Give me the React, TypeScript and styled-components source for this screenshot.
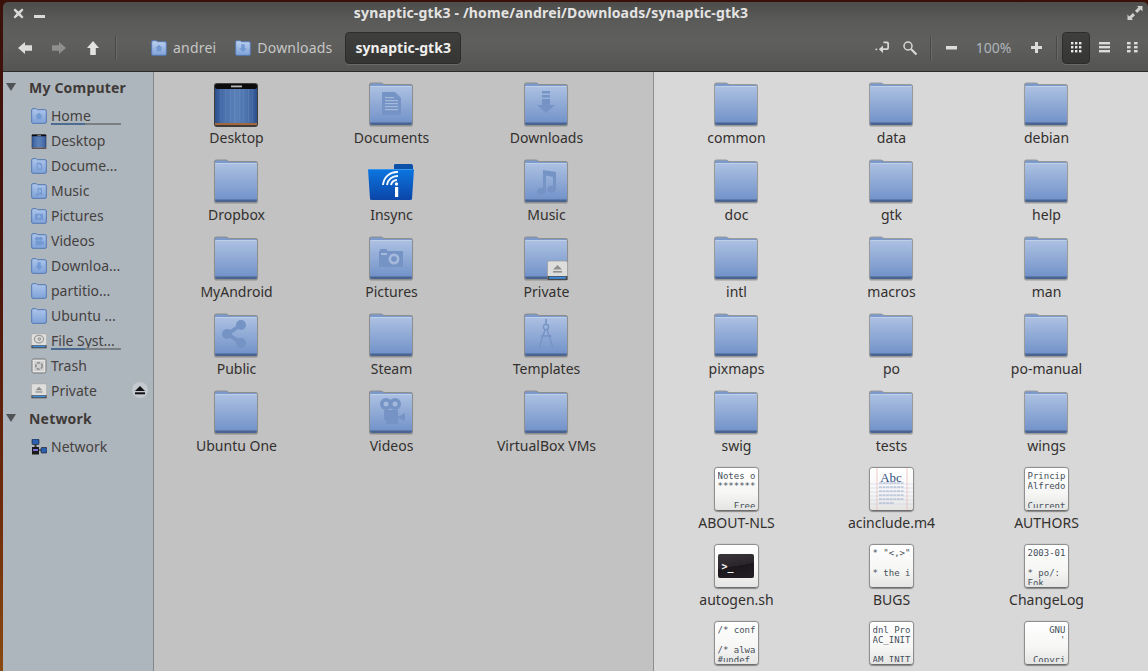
import React from "react";
import styled, { createGlobalStyle } from "styled-components";

const Global = createGlobalStyle`
  html, body { margin: 0; height: 100%; background: #2a0f08; overflow: hidden; }
  #root { height: 671px; }
  * { box-sizing: border-box; }
`;

const FONT = `"Noto Sans", "Open Sans", sans-serif`;

const Desktop = styled.div`
  width: 1148px; height: 671px; padding: 2px 0 0 3px;
  background: linear-gradient(180deg, #3a100a 0%, #4a150c 40%, #6e2a0a 75%, #8a4a10 100%);
  overflow: hidden;
`;
const Window = styled.div`
  height: 100%; display: flex; flex-direction: column; border-radius: 5px 5px 0 0; overflow: hidden;
  font-family: ${FONT};
`;
const Chrome = styled.div`
  height: 70px; flex: none; display: flex; flex-direction: column;
  background: linear-gradient(180deg, #4d4d4b 0%, #5b5b5a 30%, #5f5f5e 60%, #545453 100%);
  border-bottom: 1px solid #2c2c2c;
`;
const TitleBar = styled.div`
  height: 22px; flex: none; display: flex; align-items: center; position: relative; padding: 0 5px 0 10px;
`;
const Title = styled.div`
  position: absolute; left: 0; right: 49px; top: 1px; text-align: center;
  font-size: 14px; line-height: 20px; font-weight: 700; color: #e4e4e2; letter-spacing: 0.15px;
`;
const WinButtons = styled.div`display: flex; align-items: center; gap: 10px;`;
const Spacer = styled.div`flex: 1;`;
const ToolBar = styled.div`
  height: 47px; display: flex; align-items: center; padding: 0 2px 0 14px;
`;
const NavButton = styled.div<{ $w: number }>`
  width: ${p => p.$w}px; display: flex; align-items: center; justify-content: center; flex: none;
`;
const VSep = styled.div<{ $ml: number; $mr: number }>`
  width: 1px; height: 24px; background: #484847; box-shadow: 1px 0 0 #6a6a69;
  margin: 0 ${p => p.$mr}px 0 ${p => p.$ml}px; flex: none;
`;
const Crumb = styled.div<{ $gap: number }>`
  display: flex; align-items: center; gap: 6px; color: #c6c6c4; font-size: 14px; margin-right: ${p => p.$gap}px; letter-spacing: 0.2px;
`;
const ActiveCrumb = styled.div`
  height: 32px; padding: 0 9px; display: flex; align-items: center; border-radius: 4px;
  background: linear-gradient(180deg, #3f3f3e, #353534); border: 1px solid #2d2d2c; box-shadow: 0 1px 0 #6a6a69;
  color: #f0f0ee; font-weight: 700; font-size: 14px; letter-spacing: 0.05px;
`;
const Zoom = styled.div`
  width: 73px; text-align: center; color: #aeb4bb; font-size: 14px; flex: none;
`;
const ViewActive = styled.div`
  width: 28px; height: 32px; border-radius: 4px; display: flex; align-items: center; justify-content: center; flex: none;
  background: linear-gradient(180deg, #3f3f3e, #353534); border: 1px solid #2d2d2c; box-shadow: 0 1px 0 #6a6a69;
`;
const Body = styled.div`flex: 1; display: flex; min-height: 0;`;
const Sidebar = styled.div`
  width: 151px; flex: none; background: #aeb6bd; border-right: 1px solid #7f868c; padding-top: 4px; overflow: hidden;
`;
const Group = styled.div`
  height: 22px; display: flex; align-items: center; color: #3e3a38; font-weight: 700; font-size: 14px; letter-spacing: 0.2px;
  padding-left: 3px;
`;
const GroupGap = styled.div<{ $h: number }>`height: ${p => p.$h}px;`;
const Caret = styled.svg`width: 10px; height: 8px; margin-right: 13px; flex: none;`;
const SideRow = styled.div`
  height: 25px; display: flex; align-items: center; padding-left: 28px; gap: 4px; position: relative;
  color: #45413f; font-size: 14px; white-space: nowrap;
`;
const Usage = styled.div`
  position: absolute; left: 48px; top: 20px; width: 70px; height: 2px; background: #7b7f83;
`;
const UsageFill = styled.div`height: 100%; background: #4c6b8f;`;
const EjectBtn = styled.div`
  position: absolute; left: 129px; top: 4px; width: 16px; height: 16px; border-radius: 50%; background: #c3c9ce;
  display: flex; align-items: center; justify-content: center;
`;
const Panes = styled.div`flex: 1; display: flex; min-width: 0;`;
const Pane = styled.div<{ $bg: string; $w: number }>`
  width: ${p => p.$w}px; flex: none; background: ${p => p.$bg}; padding: 7px 0 0 5px; overflow: hidden;
  display: grid; grid-template-columns: repeat(3, 155px); grid-auto-rows: 77px; align-content: start;
`;
const PaneRule = styled.div`width: 1px; background: #8e8e8e; flex: none;`;
const Item = styled.div`
  display: flex; flex-direction: column; align-items: center; color: #33302e; font-size: 14px; line-height: 19px; white-space: nowrap;
`;
const IconBox = styled.div`
  width: 48px; height: 48px; flex: none; position: relative; margin: 0 2px 1px 0;
  svg { display: block; }
`;
const Thumb = styled.div`
  position: absolute; left: 3px; top: 4px; width: 43px; height: 43px; background: linear-gradient(180deg, #ffffff 0%, #f6f6f5 60%, #e4e4e3 100%);
  border-radius: 3px; border-bottom: 1px solid #6e6e6e; box-shadow: 0 0 1px 1px rgba(70,70,70,.55);
  overflow: hidden; padding: 3px 0 0 3px;
  font-family: "DejaVu Sans Mono", "Liberation Mono", monospace; font-size: 9px; line-height: 10px; color: #46505a; white-space: pre;
`;
const ThumbClip = styled.div`width: 38px; height: 37px; overflow: hidden;`;
const Term = styled.div`
  position: absolute; left: 3px; top: 9px; width: 36px; height: 24px; border-radius: 2px; background: linear-gradient(170deg, #3a353a 0%, #2a252a 50%, #1b171b 50%, #231e25 100%);
  color: #f2f2f2; font-size: 10px; font-weight: 700; line-height: 10px; padding: 8px 0 0 4px;
`;
const AbcWord = styled.div`
  font-family: "Liberation Serif", serif; font-size: 13px; line-height: 13px; color: #33507f; text-align: center; padding-right: 3px; position: relative;
`;

const Folder = ({ size = 48, glyph, id }: { size?: number; glyph?: React.ReactNode; id: string }) => (
  <svg width={size} height={size} viewBox="0 0 48 48">
    <defs>
      <linearGradient id={id} x1="0" y1="0" x2="0" y2="1">
        <stop offset="0" stopColor="#adc1e2" />
        <stop offset="1" stopColor="#7091c8" />
      </linearGradient>
    </defs>
    <path d="M2.5 6.5 Q2.5 4 5 4 H14 Q16 4 17 5.5 H43 Q45.5 5.5 45.5 8 V44 Q45.5 47 43 47 H5 Q2.5 47 2.5 44 Z" fill="#4f5052" opacity=".45" transform="translate(-.6 -.6) scale(1.025)" />
    <path d="M3 6.5 Q3 4.5 5 4.5 H14 Q16 4.5 17 6 H43 Q45 6 45 8 V44 Q45 46 43 46 H5 Q3 46 3 44 Z" fill="#7b9acb" />
    <rect x="3" y="7" width="42" height="38" rx="2" fill={`url(#${id})`} />
    <rect x="3" y="7" width="42" height=".8" fill="#c3d2ea" />
    <path d="M3 43.6 H45 V44 Q45 46 43 46 H5 Q3 46 3 44 Z" fill="#4a6492" />
    {glyph}
  </svg>
);

const G = "#7593c4";
const glyphs: Record<string, React.ReactNode> = {
  doc: <g fill={G}><path d="M15 13 H28 L34 19 V36 H15 Z" /><g fill="#a4b9dc"><rect x="18" y="18" width="9" height="1.2" /><rect x="18" y="21" width="13" height="1.2" /><rect x="18" y="24" width="13" height="1.2" /><rect x="18" y="27" width="13" height="1.2" /><rect x="18" y="30" width="13" height="1.2" /></g></g>,
  down: <g fill={G}><rect x="20" y="12" width="8" height="2.5" /><rect x="20" y="16" width="8" height="2.5" /><path d="M20 20 H28 V26 H33 L24 34 L15 26 H20 Z" /></g>,
  music: <g fill={G}><path d="M21 14 L34 16 V33 A4.5 3.6 0 1 1 31 30 V21 L24 19.6 V35 A4.5 3.6 0 1 1 21 32 Z" /></g>,
  camera: <g fill={G}><rect x="13" y="16" width="7" height="2" /><path d="M12 18 H36 V34 H12 Z" /><circle cx="27" cy="26" r="5.5" fill="#a4b9dc" /><circle cx="27" cy="26" r="2.8" fill={G} /><rect x="14" y="20" width="6" height="2" fill="#a4b9dc" /></g>,
  share: <g fill={G}><circle cx="15" cy="24" r="5" /><circle cx="29" cy="15" r="5" /><circle cx="29" cy="33" r="5" /><path d="M15 22 L28 13.5 L30 16.5 L19 24 L30 31.5 L28 34.5 L15 26 Z" /></g>,
  tmpl: <g fill="none" stroke={G} strokeWidth="1.3"><path d="M24 9 V14" strokeWidth="1.6" /><circle cx="24" cy="17" r="2.6" /><path d="M23 19.5 L17 38 M25 19.5 L31 38 M18.5 26 H29.5" /></g>,
  video: <g fill={G}><circle cx="19" cy="17" r="6" /><circle cx="28" cy="17" r="6" /><path d="M17 23 H31 V30 L38 26 V34 L31 31 V37 H19 V34 L17 32 Z" /><circle cx="19" cy="17" r="2.5" fill="#a4b9dc" /><circle cx="28" cy="17" r="2.5" fill="#a4b9dc" /></g>,
};

const DesktopIcon = ({ small }: { small?: boolean }) => {
  const s = small ? 16 : 48;
  const gid = small ? "dk1" : "dk2";
  return (
    <svg width={s} height={s} viewBox="0 0 48 48">
      <defs>
        <linearGradient id={gid} x1="0" y1="0" x2="1" y2="0">
          <stop offset="0" stopColor="#2c4f8e" />
          <stop offset=".2" stopColor="#4a70ab" />
          <stop offset=".5" stopColor="#5a80b8" />
          <stop offset=".8" stopColor="#4a70ab" />
          <stop offset="1" stopColor="#2c4f8e" />
        </linearGradient>
      </defs>
      <rect x="2" y="4" width="44" height="44" rx="3" fill="#3e3d3c" />
      <rect x="3" y="5" width="42" height="41" rx="2" fill={`url(#${gid})`} />
      {[8, 13, 18, 22, 27, 31, 36, 40].map(x => <rect key={x} x={x} y="10" width="1.2" height="33" fill="#8aa6d2" opacity=".18" />)}
      <rect x="3" y="5" width="42" height="5" rx="2" fill="#0c0c0c" />
      <rect x="19" y="6.5" width="11" height="1.8" fill="#b8b8b8" />
      <rect x="3" y="44" width="42" height="2" fill="#a3693b" />
    </svg>
  );
};

const Insync = () => (
  <svg width="48" height="48" viewBox="0 0 48 48">
    <defs>
      <linearGradient id="ins" x1="0" y1="0" x2="0" y2="1">
        <stop offset="0" stopColor="#0b76e0" />
        <stop offset="1" stopColor="#0c45a8" />
      </linearGradient>
    </defs>
    <path d="M27 9 Q27 8 29 8 H44 Q46 8 46 10 V13 H27 Z" fill="#0c50a8" />
    <path d="M1 13 H47 L45 43 Q45 44 43 44 H5 Q3 44 3 43 Z" fill="url(#ins)" />
    <path d="M1 13 H47 V14 H1 Z" fill="#3a95ec" />
    <g fill="none" stroke="#f4f8fd" strokeWidth="1.9">
      <path d="M16 29 A14 14 0 0 1 31 16" />
      <path d="M20 29 A10.5 10.5 0 0 1 31 20" />
      <path d="M24 29 A6.5 6.5 0 0 1 30 24" />
    </g>
    <circle cx="29.5" cy="28" r="1.7" fill="#fff" />
    <rect x="28" y="31" width="3.2" height="10" fill="#fff" />
  </svg>
);

const Drive = ({ small, hollow }: { small?: boolean; hollow?: boolean }) => {
  const s = small ? 16 : 21;
  return (
    <svg width={s} height={s} viewBox="0 0 21 21">
      <rect x=".5" y="1" width="20" height="19" rx="2" fill="#dededc" stroke="#9b9b9a" strokeWidth=".7" />
      <rect x=".5" y="16" width="20" height="4" fill="#4a4a4a" />
      <rect x="2" y="16.8" width="17" height="2" rx="1" fill="#3f8fe0" />
      {hollow ? (
        <g fill="none" stroke="#9a9a9a" strokeWidth="1.6"><ellipse cx="10.5" cy="8" rx="6" ry="5" /><circle cx="11" cy="8" r="1.6" /></g>
      ) : (
        <g fill="#8f8f8f"><path d="M10.5 5 L15 9.5 H6 Z" /><rect x="6" y="11" width="9" height="1.6" /></g>
      )}
    </svg>
  );
};

const TrashIcon = () => (
  <svg width="16" height="16" viewBox="0 0 16 16">
    <rect x="1" y="1" width="14" height="14" rx="1.5" fill="#dcdcda" stroke="#77797b" />
    <rect x="2.5" y="2.5" width="11" height="11" fill="#cfd0cf" stroke="#eeeeee" strokeWidth=".6" />
    <circle cx="8" cy="8" r="3.2" fill="none" stroke="#8a8a8a" strokeWidth="1.5" strokeDasharray="3 1.2" />
  </svg>
);

const NetworkIcon = () => (
  <svg width="16" height="16" viewBox="0 0 16 16">
    <rect x="1" y="0" width="7" height="5.5" rx="1" fill="#2b60b0" stroke="#111" strokeWidth=".6" />
    <rect x="3.5" y="5.5" width="2" height="3" fill="#333" />
    <rect x="1" y="8" width="7" height="7.5" fill="#1a1a1a" />
    <rect x="2" y="10" width="5" height="2" fill="#7f6fd8" />
    <rect x="8" y="10.5" width="2" height="1" fill="#222" />
    <rect x="10" y="8.5" width="6" height="5.5" rx="1" fill="#2b60b0" stroke="#111" strokeWidth=".6" />
  </svg>
);

const Arrow = ({ dir, fill }: { dir: "l" | "r" | "u"; fill: string }) => {
  const rot = dir === "l" ? 0 : dir === "r" ? 180 : 90;
  return (
    <svg width="16" height="16" viewBox="0 0 16 16">
      <path transform={`rotate(${rot} 8 8)`} d="M1 8 L8 2 V5.2 H15 V10.8 H8 V14 Z" fill={fill} />
    </svg>
  );
};

const SG = "#7399d2";
const sideFolder: Record<string, React.ReactNode> = {
  home: <path d="M24 14 L35 25 H31 V34 H17 V25 H13 Z" fill={SG} />,
  doc: <path d="M17 14 H28 L33 19 V35 H17 Z M20 18 V32 H30 V21 H26 V18 Z" fill={SG} />,
  music: <path d="M20 14 L33 16 V32 A4.5 3.6 0 1 1 30 29 V20 L23 19 V35 A4.5 3.6 0 1 1 20 32 Z" fill={SG} />,
  pic: <path d="M12 17 H36 V35 H12 Z M24 21 A5 5 0 1 0 24 31 A5 5 0 1 0 24 21 Z" fill={SG} fillRule="evenodd" />,
  vid: <g fill={SG}><circle cx="18" cy="17" r="6" /><circle cx="29" cy="17" r="6" /><path d="M14 23 H32 V27 L39 23 V36 L32 32 V37 H14 Z" /></g>,
  down: <path d="M19 13 H29 V25 H35 L24 37 L13 25 H19 Z" fill={SG} />,
};

const SideFolder = ({ g, id, tone }: { g?: string; id: string; tone?: boolean }) => (
  <svg width="16" height="16" viewBox="0 0 48 48">
    <defs>
      <linearGradient id={id} x1="0" y1="0" x2="0" y2="1">
        <stop offset="0" stopColor={tone ? "#bcd0ee" : "#adc5ea"} />
        <stop offset="1" stopColor="#7fa2d8" />
      </linearGradient>
    </defs>
    <path d="M2 6 Q2 2 6 2 H16 L19 5 H42 Q46 5 46 9 V42 Q46 46 42 46 H6 Q2 46 2 42 Z" fill={`url(#${id})`} stroke="#5579b2" strokeWidth="3" />
    {g ? sideFolder[g] : null}
  </svg>
);

const sideRows: { label: string; icon: React.ReactNode; usage?: number; eject?: boolean }[] = [
  { label: "Home", icon: <SideFolder id="s1" g="home" />, usage: 48 },
  { label: "Desktop", icon: <DesktopIcon small /> },
  { label: "Docume...", icon: <SideFolder id="s2" g="doc" /> },
  { label: "Music", icon: <SideFolder id="s3" g="music" /> },
  { label: "Pictures", icon: <SideFolder id="s4" g="pic" /> },
  { label: "Videos", icon: <SideFolder id="s5" g="vid" /> },
  { label: "Downloa...", icon: <SideFolder id="s6" g="down" /> },
  { label: "partitio...", icon: <SideFolder id="s7" /> },
  { label: "Ubuntu ...", icon: <SideFolder id="s8" /> },
  { label: "File Syst...", icon: <Drive small hollow />, usage: 48 },
  { label: "Trash", icon: <TrashIcon /> },
  { label: "Private", icon: <Drive small />, eject: true },
];

const Eject = () => (
  <svg width="10" height="10" viewBox="0 0 10 10"><path d="M5 1 L10 6 H0 Z" fill="#111" /><rect y="7.3" width="10" height="2" fill="#111" /></svg>
);

type Entry = { name: string; kind?: string; text?: string };
const left: Entry[] = [
  { name: "Desktop", kind: "desktop" },
  { name: "Documents", kind: "doc" },
  { name: "Downloads", kind: "down" },
  { name: "Dropbox" },
  { name: "Insync", kind: "insync" },
  { name: "Music", kind: "music" },
  { name: "MyAndroid" },
  { name: "Pictures", kind: "camera" },
  { name: "Private", kind: "private" },
  { name: "Public", kind: "share" },
  { name: "Steam" },
  { name: "Templates", kind: "tmpl" },
  { name: "Ubuntu One" },
  { name: "Videos", kind: "video" },
  { name: "VirtualBox VMs" },
];
const right: Entry[] = [
  ..."common data debian doc gtk help intl macros man pixmaps po po-manual swig tests wings".split(" ").map(name => ({ name })),
  { name: "ABOUT-NLS", kind: "text", text: "Notes o\n*******\n\n   Free" },
  { name: "acinclude.m4", kind: "abc" },
  { name: "AUTHORS", kind: "text", text: "Princip\nAlfredo\n\nCurrent" },
  { name: "autogen.sh", kind: "term" },
  { name: "BUGS", kind: "text", text: '* "<,>"\n\n* the i' },
  { name: "ChangeLog", kind: "text", text: "2003-01\n\n* po/:\nFok" },
  { name: "", kind: "text", text: "/* conf\n\n/* alwa\n#undef" },
  { name: "", kind: "text", text: "dnl Pro\nAC_INIT\n\nAM_INIT" },
  { name: "", kind: "text", text: "    GNU\n      '\n\n Copyri" },
];

const EjectBadge = styled.div`position: absolute; right: 2px; bottom: 0;`;
const AbcLines = styled.svg`position: absolute; left: 0; top: 0;`;

const renderIcon = (e: Entry, id: string) => {
  switch (e.kind) {
    case "desktop": return <DesktopIcon />;
    case "insync": return <Insync />;
    case "private": return <><Folder id={id} /><EjectBadge><Drive /></EjectBadge></>;
    case "text": return <Thumb><ThumbClip>{e.text}</ThumbClip></Thumb>;
    case "term": return <Thumb><Term>{">_"}</Term></Thumb>;
    case "abc": return (
      <Thumb>
        <AbcLines width="44" height="43" viewBox="0 0 44 43">
          <path d="M7 0 V43 M37 0 V43" stroke="#f0b4b4" strokeWidth=".7" />
          {[16, 20, 24, 28, 32, 36].map(y => <path key={y} d={`M0 ${y} H44`} stroke="#c6d0e4" strokeWidth=".6" />)}
          {[15, 19, 23, 27, 31, 35].map(y => <path key={y} d={`M9 ${y} H${y === 35 ? 24 : 34}`} stroke="#7f94c0" strokeWidth=".7" strokeDasharray="3 .6" />)}
        </AbcLines>
        <AbcWord>Abc</AbcWord>
      </Thumb>
    );
    default: return <Folder id={id} glyph={e.kind ? glyphs[e.kind] : undefined} />;
  }
};

const Grid = ({ items, prefix }: { items: Entry[]; prefix: string }) => (
  <>
    {items.map((e, i) => (
      <Item key={prefix + i}>
        <IconBox>{renderIcon(e, `${prefix}${i}`)}</IconBox>
        {e.name}
      </Item>
    ))}
  </>
);

export default function App() {
  return (
    <Desktop>
      <Global />
      <Window>
        <Chrome>
          <TitleBar>
            <WinButtons>
              <svg width="11" height="11" viewBox="0 0 11 11"><path d="M2 .5 L5.5 3.6 L9 .5 L10.5 2 L7.4 5.5 L10.5 9 L9 10.5 L5.5 7.4 L2 10.5 L.5 9 L3.6 5.5 L.5 2 Z" fill="#d9d9d7" /></svg>
              <svg width="11" height="11" viewBox="0 0 11 11"><rect y="7" width="11" height="3" fill="#dadad8" /></svg>
            </WinButtons>
            <Title>synaptic-gtk3 - /home/andrei/Downloads/synaptic-gtk3</Title>
            <Spacer />
            <svg width="16" height="16" viewBox="0 0 16 16" fill="#cfcfcd">
              <path d="M10 1 H15.5 V6.5 L13.6 4.6 L10.2 8 L8 5.8 L11.4 2.4 Z" />
              <path d="M6 15 H.5 V9.5 L2.4 11.4 L5.8 8 L8 10.2 L4.6 13.6 Z" />
            </svg>
          </TitleBar>
          <ToolBar>
            <NavButton $w={16}><Arrow dir="l" fill="#dcdcda" /></NavButton>
            <NavButton $w={52}><Arrow dir="r" fill="#8f8f8e" /></NavButton>
            <NavButton $w={16}><Arrow dir="u" fill="#e2e2e0" /></NavButton>
            <VSep $ml={14} $mr={35} />
            <Crumb $gap={19}><SideFolder id="c1" g="home" tone />andrei</Crumb>
            <Crumb $gap={13}><SideFolder id="c2" g="down" tone />Downloads</Crumb>
            <ActiveCrumb>synaptic-gtk3</ActiveCrumb>
            <Spacer />
            <NavButton $w={16}>
              <svg width="15" height="15" viewBox="0 0 15 15" fill="#d8d8d6">
                <path d="M8.5 1.5 H12 Q14 1.5 14 3.5 V8 Q14 10 12 10 H8 V13 L3.8 9.2 L8 5.5 V8.3 H11.4 Q12.3 8.3 12.3 7.4 V4 Q12.3 3.2 11.4 3.2 H8.5 Z" />
                <rect x="0.5" y="8.6" width="1.6" height="1.6" />
              </svg>
            </NavButton>
            <NavButton $w={40}>
              <svg width="16" height="16" viewBox="0 0 16 16"><circle cx="6" cy="6" r="4" fill="none" stroke="#d8d8d6" strokeWidth="1.5" /><path d="M9 9 L14.5 14.5" stroke="#d8d8d6" strokeWidth="2.2" /></svg>
            </NavButton>
            <VSep $ml={0} $mr={14} />
            <NavButton $w={12}>
              <svg width="11" height="4" viewBox="0 0 11 4"><rect width="11" height="3.5" fill="#dcdcda" /></svg>
            </NavButton>
            <Zoom>100%</Zoom>
            <NavButton $w={12}>
              <svg width="11" height="11" viewBox="0 0 11 11"><path d="M4 0 H7 V4 H11 V7 H7 V11 H4 V7 H0 V4 H4 Z" fill="#dcdcda" /></svg>
            </NavButton>
            <VSep $ml={14} $mr={5} />
            <ViewActive>
              <svg width="11" height="11" viewBox="0 0 11 11" fill="#e8e8e6">
                {[0, 4, 8].flatMap(y => [0, 4, 8].map(x => <rect key={`${x}${y}`} x={x} y={y} width="2.4" height="2.4" />))}
              </svg>
            </ViewActive>
            <NavButton $w={28}>
              <svg width="11" height="11" viewBox="0 0 11 11" fill="#dcdcda"><rect width="11" height="2.4" /><rect y="4" width="11" height="2.4" /><rect y="8" width="11" height="2.4" /></svg>
            </NavButton>
            <NavButton $w={28}>
              <svg width="11" height="11" viewBox="0 0 11 11" fill="#dcdcda">
                {[0, 4, 8].flatMap(y => [0, 7].map(x => <rect key={`${x}${y}`} x={x} y={y} width="3.6" height="2.4" />))}
              </svg>
            </NavButton>
          </ToolBar>
        </Chrome>
        <Body>
          <Sidebar>
            <Group>
              <Caret viewBox="0 0 10 8"><path d="M0 0 H10 L5 8 Z" fill="#4f5356" /></Caret>My Computer
            </Group>
            <GroupGap $h={5} />
            {sideRows.map(r => (
              <SideRow key={r.label}>
                {r.icon}
                {r.label}
                {r.usage ? <Usage><UsageFill style={{ width: `${r.usage}%` }} /></Usage> : null}
                {r.eject ? <EjectBtn><Eject /></EjectBtn> : null}
              </SideRow>
            ))}
            <GroupGap $h={4} />
            <Group>
              <Caret viewBox="0 0 10 8"><path d="M0 0 H10 L5 8 Z" fill="#4f5356" /></Caret>Network
            </Group>
            <GroupGap $h={5} />
            <SideRow><NetworkIcon />Network</SideRow>
          </Sidebar>
          <Panes>
            <Pane $bg="#c2c2c2" $w={499}><Grid items={left} prefix="l" /></Pane>
            <PaneRule />
            <Pane $bg="#d8d8d8" $w={494}><Grid items={right} prefix="r" /></Pane>
          </Panes>
        </Body>
      </Window>
    </Desktop>
  );
}
